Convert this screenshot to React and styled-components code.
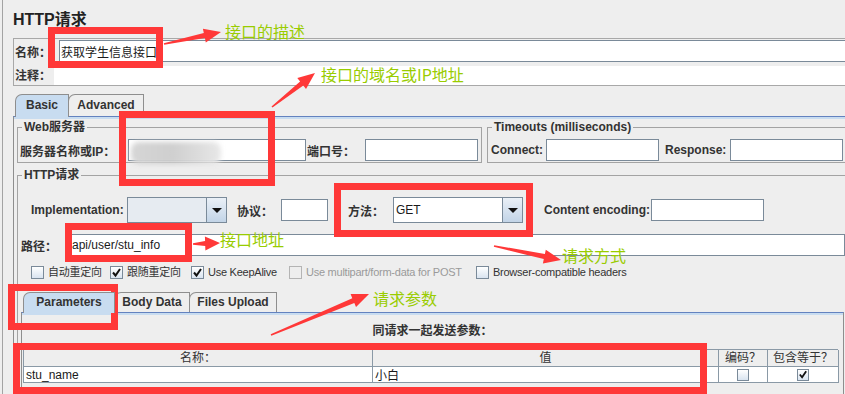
import React from "react";
import styled, { createGlobalStyle } from "styled-components";

const GlobalStyle = createGlobalStyle`
  html, body {
    margin: 0;
    padding: 0;
    background: #eeeeee;
    overflow: hidden;
  }
  body {
    font-family: "Liberation Sans", "Noto Sans CJK SC", sans-serif;
    font-size: 12px;
    color: #333333;
  }
  * {
    box-sizing: border-box;
  }
`;

const Page = styled.div`
  position: relative;
  width: 845px;
  height: 394px;
  overflow: hidden;
`;

const Frame = styled.div`
  margin-left: 2px;
  width: 846px;
  height: 394px;
  border-left: 1px solid #a3a3a3;
  padding-left: 10px;
`;

const Title = styled.div`
  height: 38px;
  padding-top: 10px;
  font-size: 16px;
  font-weight: bold;
  line-height: 20px;
  color: #222222;
`;

const NamePanel = styled.div`
  height: 48px;
  border: 1px solid #a8a8a8;
  padding-left: 1px;
`;

const Row = styled.div`
  display: flex;
  align-items: center;
  height: ${(p) => p.$h || 22}px;
  margin-top: ${(p) => p.$mt || 0}px;
  padding-left: ${(p) => p.$pl || 0}px;
`;

const Label = styled.div`
  flex: none;
  width: ${(p) => p.$w}px;
  margin-left: ${(p) => p.$ml || 0}px;
  padding-left: ${(p) => p.$pl || 0}px;
  font-weight: bold;
  font-size: 12px;
  white-space: nowrap;
  color: #333333;
`;

const TextField = styled.div`
  display: flex;
  align-items: center;
  flex: ${(p) => (p.$w ? "none" : 1)};
  width: ${(p) => (p.$w ? `${p.$w}px` : "auto")};
  height: 22px;
  padding-left: ${(p) => p.$pl ?? 3}px;
  background: #ffffff;
  border: 1px solid #7a8a99;
  font-size: 12px;
  color: #1a1a1a;
  white-space: nowrap;
  overflow: visible;
`;

const CommentField = styled.div`
  flex: 1;
  align-self: flex-end;
  height: 19px;
  background: #ffffff;
`;

const Blurred = styled.span`
  flex: none;
  width: 90px;
  height: 22px;
  margin-top: 5px;
  border-radius: 8px;
  background: linear-gradient(90deg, #d6d6d6, #cfcfcf 45%, #dcdcdc 75%, #e8e8e8);
  filter: blur(2.5px);
`;

const TabBar = styled.div`
  display: flex;
  align-items: flex-end;
  height: ${(p) => p.$h}px;
  margin-top: ${(p) => p.$mt}px;
  padding-left: ${(p) => p.$pl}px;
`;

const Tab = styled.div`
  position: relative;
  flex: none;
  width: ${(p) => p.$w}px;
  height: ${(p) => (p.$active ? p.$h + 1 : p.$h)}px;
  margin-bottom: ${(p) => (p.$active ? -1 : 0)}px;
  z-index: ${(p) => (p.$active ? 1 : 0)};
  border: 1px solid #8e8e8e;
  border-bottom: none;
  border-top-left-radius: 7px;
  background: ${(p) => (p.$active ? "#c8dcf0" : "#eeeeee")};
  font-weight: bold;
  font-size: 12px;
  line-height: ${(p) => p.$h - 2}px;
  text-align: center;
  color: #333333;

  & + & {
    margin-left: -1px;
  }
`;

const TabPanel = styled.div`
  border-top: 1px solid #6382bf;
  border-left: 1px solid #8e8e8e;
  box-shadow: inset 0 2px 0 #c8dcf0;
  padding: 3px 0 0 3px;
`;

const TopRow = styled.div`
  display: flex;
  gap: 5px;
`;

const Group = styled.fieldset`
  margin: ${(p) => p.$mt || 0}px 0 0 0;
  padding: ${(p) => p.$pad};
  min-width: 0;
  border: 1px solid #a3a3a3;
  flex: ${(p) => (p.$w ? "none" : 1)};
  width: ${(p) => (p.$w ? `${p.$w}px` : "auto")};
`;

const Legend = styled.legend`
  margin-left: 2px;
  padding: 0 2px;
  font-weight: bold;
  font-size: 12px;
  line-height: 14px;
  color: #333333;
`;

const Combo = styled.div`
  display: flex;
  flex: none;
  width: ${(p) => p.$w}px;
  height: 26px;
  border: 1px solid #7a8a99;
  background: ${(p) => (p.$dim ? "#e6ebf1" : "#ffffff")};
`;

const ComboValue = styled.div`
  flex: 1;
  display: flex;
  align-items: center;
  padding-left: 2px;
  font-size: 12px;
  color: #1a1a1a;
`;

const ComboButton = styled.div`
  width: 20px;
  display: flex;
  align-items: center;
  justify-content: center;
  border-left: 1px solid #7a8a99;
  background: linear-gradient(#eaf0f7, #c2d4e7);

  &::after {
    content: "";
    border-left: 5px solid transparent;
    border-right: 5px solid transparent;
    border-top: 5px solid #111111;
  }
`;

const CheckRow = styled.div`
  display: flex;
  align-items: center;
  height: 13px;
  margin-top: 10px;
  padding-left: 11px;
`;

const CheckItem = styled.div`
  display: flex;
  align-items: center;
  gap: 4px;
  flex: none;
  width: ${(p) => (p.$w ? `${p.$w}px` : "auto")};
  font-size: 11px;
  line-height: 13px;
  letter-spacing: -0.25px;
  white-space: nowrap;
  color: ${(p) => (p.$off ? "#9a9a9a" : "#333333")};
`;

const Box = styled.div`
  flex: none;
  width: ${(p) => p.$s || 13}px;
  height: ${(p) => p.$s || 13}px;
  border: 1px solid ${(p) => (p.$off ? "#b4b4b4" : "#7a8a99")};
  background: ${(p) => (p.$off ? "#eeeeee" : "linear-gradient(#ffffff, #d9e4f0)")};
  display: flex;
  align-items: center;
  justify-content: center;
`;

const ParamPanel = styled.div`
  margin: 0 1px 0 1px;
  height: 120px;
  border-top: 1px solid #6382bf;
  border-left: 1px solid #8e8e8e;
  border-right: 1px solid #8e8e8e;
  box-shadow: inset 0 2px 0 #c8dcf0;
`;

const Caption = styled.div`
  margin-top: 10px;
  height: 16px;
  line-height: 16px;
  font-weight: bold;
  font-size: 12px;
  text-align: center;
  color: #333333;
`;

const Table = styled.div`
  display: grid;
  grid-template-columns: 349px 346px 49px 71px;
  width: 815px;
  margin: 10px 0 0 1px;
  border-top: 1px solid #8a99a6;
  border-left: 1px solid #8a99a6;
`;

const HeadCell = styled.div`
  height: 17px;
  border-right: 1px solid #8a99a6;
  border-bottom: 1px solid #8a99a6;
  background: #eeeeee;
  font-size: 12px;
  line-height: 16px;
  text-align: center;
  color: #333333;
`;

const Cell = styled.div`
  height: 16px;
  display: flex;
  align-items: center;
  justify-content: ${(p) => (p.$center ? "center" : "flex-start")};
  padding-left: ${(p) => (p.$center ? 0 : 2)}px;
  border-right: 1px solid #8a99a6;
  border-bottom: 1px solid #8a99a6;
  background: #ffffff;
  font-size: 12px;
  color: #1a1a1a;
`;

const RedBox = styled.div`
  position: absolute;
  left: ${(p) => p.$x}px;
  top: ${(p) => p.$y}px;
  width: ${(p) => p.$w}px;
  height: ${(p) => p.$h}px;
  border: 7px solid #ff3838;
  pointer-events: none;
`;

const Note = styled.div`
  position: absolute;
  left: ${(p) => p.$x}px;
  top: ${(p) => p.$y}px;
  font-family: "Noto Sans CJK SC", "Liberation Sans", sans-serif;
  font-size: 16px;
  line-height: 16px;
  color: #99cc00;
  white-space: nowrap;
`;

const ArrowLayer = styled.svg`
  position: absolute;
  left: 0;
  top: 0;
  pointer-events: none;
`;

const Check = () => (
  <svg width="11" height="11" viewBox="0 0 11 11">
    <path d="M2 5.5 L4.5 8.5 L9 2" fill="none" stroke="#111" strokeWidth="2" />
  </svg>
);

const arrows = [
  [164, 44, 221, 32],
  [272, 107, 315, 73],
  [193, 244, 220, 243],
  [494, 246, 561, 260],
  [271, 335, 369, 294],
];

function arrowPoints([x1, y1, x2, y2]) {
  const dx = x2 - x1;
  const dy = y2 - y1;
  const len = Math.hypot(dx, dy);
  const ux = dx / len;
  const uy = dy / len;
  const nx = -uy;
  const ny = ux;
  const head = Math.min(17, len * 0.55);
  const bx = x2 - ux * head;
  const by = y2 - uy * head;
  const pts = [
    [x1 + nx * 0.8, y1 + ny * 0.8],
    [bx + nx * 2.6, by + ny * 2.6],
    [bx + nx * 7, by + ny * 7],
    [x2, y2],
    [bx - nx * 7, by - ny * 7],
    [bx - nx * 2.6, by - ny * 2.6],
    [x1 - nx * 0.8, y1 - ny * 0.8],
  ];
  return pts.map((p) => p.map((v) => v.toFixed(1)).join(",")).join(" ");
}

export default function App() {
  return (
    <Page>
      <GlobalStyle />
      <Frame>
        <Title>HTTP请求</Title>
        <NamePanel>
          <Row $h={24}>
            <Label $w={44}>名称：</Label>
            <TextField $pl={1}>获取学生信息接口</TextField>
          </Row>
          <Row $h={22}>
            <Label $w={39}>注释：</Label>
            <CommentField />
          </Row>
        </NamePanel>

        <TabBar $h={22} $mt={8} $pl={2}>
          <Tab $w={54} $h={22} $active>Basic</Tab>
          <Tab $w={76} $h={22}>Advanced</Tab>
        </TabBar>
        <TabPanel>
          <TopRow>
            <Group $w={465} $pad="5px 2px 1px 2px">
              <Legend>Web服务器</Legend>
              <Row>
                <Label $w={108}>服务器名称或IP：</Label>
                <TextField $w={178} $pl={2}>
                  <Blurred />
                </TextField>
                <Label $w={59} $pl={1}>端口号：</Label>
                <TextField $w={113} />
              </Row>
            </Group>
            <Group $pad="5px 2px 1px 2px">
              <Legend>Timeouts (milliseconds)</Legend>
              <Row>
                <Label $w={56} $pl={1}>Connect:</Label>
                <TextField $w={113} />
                <Label $w={65} $ml={6}>Response:</Label>
                <TextField $w={113} />
              </Row>
            </Group>
          </TopRow>

          <Group $mt={5} $pad="0 2px 0 2px">
            <Legend>HTTP请求</Legend>
            <Row $h={26} $mt={15} $pl={11}>
              <Label $w={96}>Implementation:</Label>
              <Combo $w={100} $dim>
                <ComboValue />
                <ComboButton />
              </Combo>
              <Label $w={44} $ml={10}>协议：</Label>
              <TextField $w={47} />
              <Label $w={45} $ml={20}>方法：</Label>
              <Combo $w={130}>
                <ComboValue>GET</ComboValue>
                <ComboButton />
              </Combo>
              <Label $w={107} $ml={21}>Content encoding:</Label>
              <TextField $w={113} />
            </Row>
            <Row $h={22} $mt={11}>
              <Label $w={45} $pl={1}>路径：</Label>
              <TextField $pl={6}>api/user/stu_info</TextField>
            </Row>
            <CheckRow>
              <CheckItem $w={79}>
                <Box />
                自动重定向
              </CheckItem>
              <CheckItem $w={81}>
                <Box>
                  <Check />
                </Box>
                跟随重定向
              </CheckItem>
              <CheckItem $w={98}>
                <Box>
                  <Check />
                </Box>
                Use KeepAlive
              </CheckItem>
              <CheckItem $w={187} $off>
                <Box $off />
                Use multipart/form-data for POST
              </CheckItem>
              <CheckItem>
                <Box />
                Browser-compatible headers
              </CheckItem>
            </CheckRow>

            <TabBar $h={20} $mt={13} $pl={3}>
              <Tab $w={92} $h={20} $active>Parameters</Tab>
              <Tab $w={76} $h={20}>Body Data</Tab>
              <Tab $w={88} $h={20}>Files Upload</Tab>
            </TabBar>
            <ParamPanel>
              <Caption>同请求一起发送参数：</Caption>
              <Table>
                <HeadCell>名称：</HeadCell>
                <HeadCell>值</HeadCell>
                <HeadCell>编码？</HeadCell>
                <HeadCell>包含等于？</HeadCell>
                <Cell>stu_name</Cell>
                <Cell>小白</Cell>
                <Cell $center>
                  <Box $s={12} />
                </Cell>
                <Cell $center>
                  <Box $s={12}>
                    <Check />
                  </Box>
                </Cell>
              </Table>
            </ParamPanel>
          </Group>
        </TabPanel>
      </Frame>

      <RedBox $x={48} $y={27} $w={115} $h={41} />
      <RedBox $x={119} $y={111} $w={156} $h={75} />
      <RedBox $x={334} $y={183} $w={199} $h={54} />
      <RedBox $x={65} $y={223} $w={127} $h={39} />
      <RedBox $x={8} $y={284} $w={110} $h={46} />
      <RedBox $x={13} $y={343} $w={694} $h={51} />

      <ArrowLayer width="845" height="394">
        {arrows.map((a, i) => (
          <polygon key={i} points={arrowPoints(a)} fill="#ff3838" />
        ))}
      </ArrowLayer>

      <Note $x={225} $y={23}>接口的描述</Note>
      <Note $x={321} $y={66}>接口的域名或IP地址</Note>
      <Note $x={220} $y={231}>接口地址</Note>
      <Note $x={562} $y={247}>请求方式</Note>
      <Note $x={373} $y={290}>请求参数</Note>
    </Page>
  );
}
